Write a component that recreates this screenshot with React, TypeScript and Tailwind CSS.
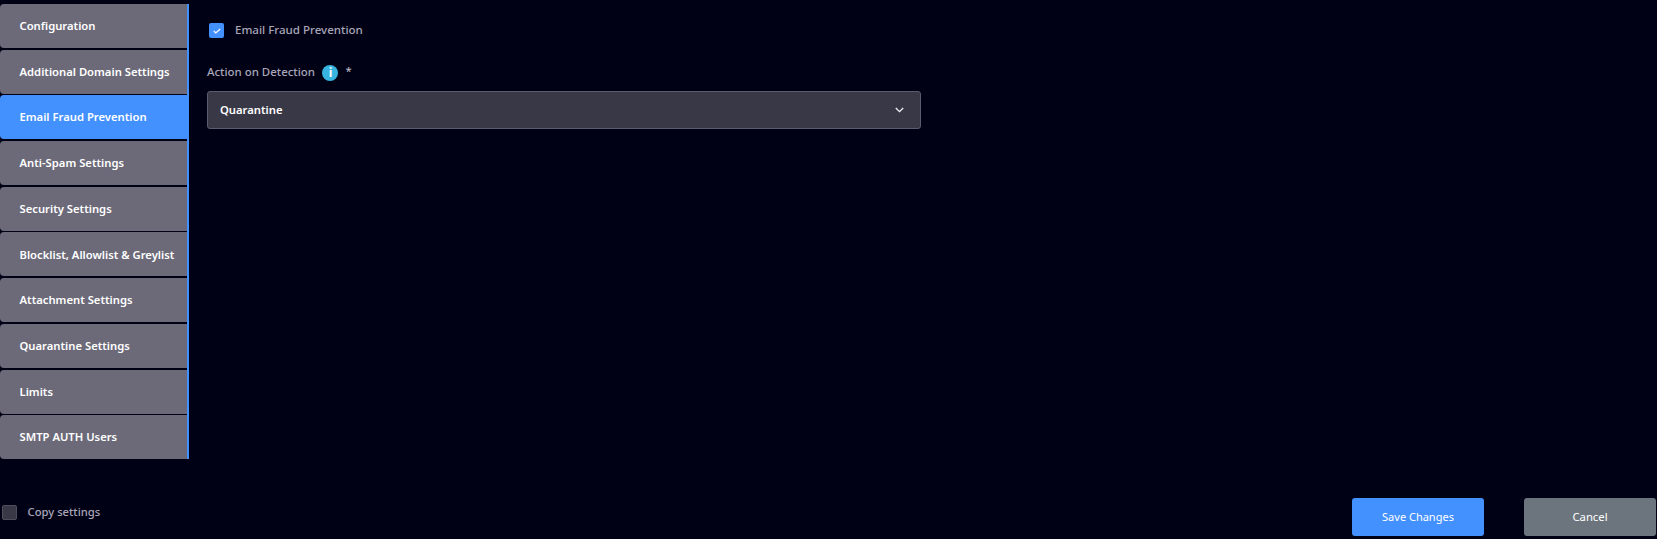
const tabs = [
  "Configuration",
  "Additional Domain Settings",
  "Email Fraud Prevention",
  "Anti-Spam Settings",
  "Security Settings",
  "Blocklist, Allowlist & Greylist",
  "Attachment Settings",
  "Quarantine Settings",
  "Limits",
  "SMTP AUTH Users",
];

function Chevron() {
  return (
    <svg width="9" height="6" viewBox="0 0 9 6" fill="none" stroke="#f0f0f4" strokeWidth="1.3">
      <path d="M.8 1l3.7 3.7L8.2 1" />
    </svg>
  );
}

export default function App() {
  return (
    <div className="flex h-[539px] w-full flex-col justify-between overflow-hidden bg-[#010116] font-['Noto_Sans',sans-serif] text-[11.25px]">
      <div className="flex items-start pt-[4px]">
        {/* Side tabs */}
        <div className="flex w-[189px] shrink-0 flex-col gap-[1.7px] border-r-2 border-[#4390ff]">
          {tabs.map((tab) => (
            <div
              key={tab}
              className={`flex h-[44px] items-center rounded-bl-[4px] rounded-tl-[4px] pl-[19.5px] pt-px font-semibold text-white ${
                tab === "Email Fraud Prevention" ? "bg-[#4390ff]" : "bg-[#6c6a79]"
              }`}
            >
              {tab}
            </div>
          ))}
        </div>

        {/* Form */}
        <div className="box-content w-[714px] pl-[18px] pt-[18px]">
          <div className="flex items-center pl-[2px]">
            <span className="flex h-[15px] w-[15px] items-center justify-center rounded-[2px] bg-[#4390ff]">
              <svg width="8" height="6" viewBox="0 0 8 6" fill="none" stroke="white" strokeWidth="1.2">
                <path d="M.8 3l2 2L7.2 1" />
              </svg>
            </span>
            <span className="ml-[11px] -translate-y-px text-[11.55px] font-medium text-[#a9a7b8]">Email Fraud Prevention</span>
          </div>
          <div className="mt-[24px] flex items-center">
            <span className="text-[11.45px] font-medium text-[#a9a7b8]">Action on Detection</span>
            <span className="ml-[7.5px] flex h-4 w-4 translate-y-px items-center justify-center rounded-full bg-[#38b4e0] text-[12px] font-bold text-white">
              i
            </span>
            <span className="ml-[7px] text-[#c4c3d0]">*</span>
          </div>
          <div className="mt-[11px] flex h-[38px] items-center justify-between rounded-[3px] border border-[#5d5c6c] bg-[#393846] pl-[12px] pr-[16px] font-semibold text-white">
            Quarantine
            <Chevron />
          </div>
        </div>
      </div>

      {/* Footer */}
      <div className="flex items-start justify-between pb-[3px] pl-[2px] pr-px">
        <div className="mt-[6px] flex items-center">
          <span className="h-[15px] w-[15px] rounded-[2px] border border-[#4f4e5c] bg-[#393846]" />
          <span className="ml-[10.5px] font-medium text-[#a9a7b8]">Copy settings</span>
        </div>
        <div className="flex gap-[40px] text-[11px]">
          <button className="h-[38px] w-[132px] rounded-[3px] bg-[#4390ff] text-white">Save Changes</button>
          <button className="h-[38px] w-[132px] rounded-[3px] bg-[#6c757d] text-[11.3px] text-white">Cancel</button>
        </div>
      </div>
    </div>
  );
}
